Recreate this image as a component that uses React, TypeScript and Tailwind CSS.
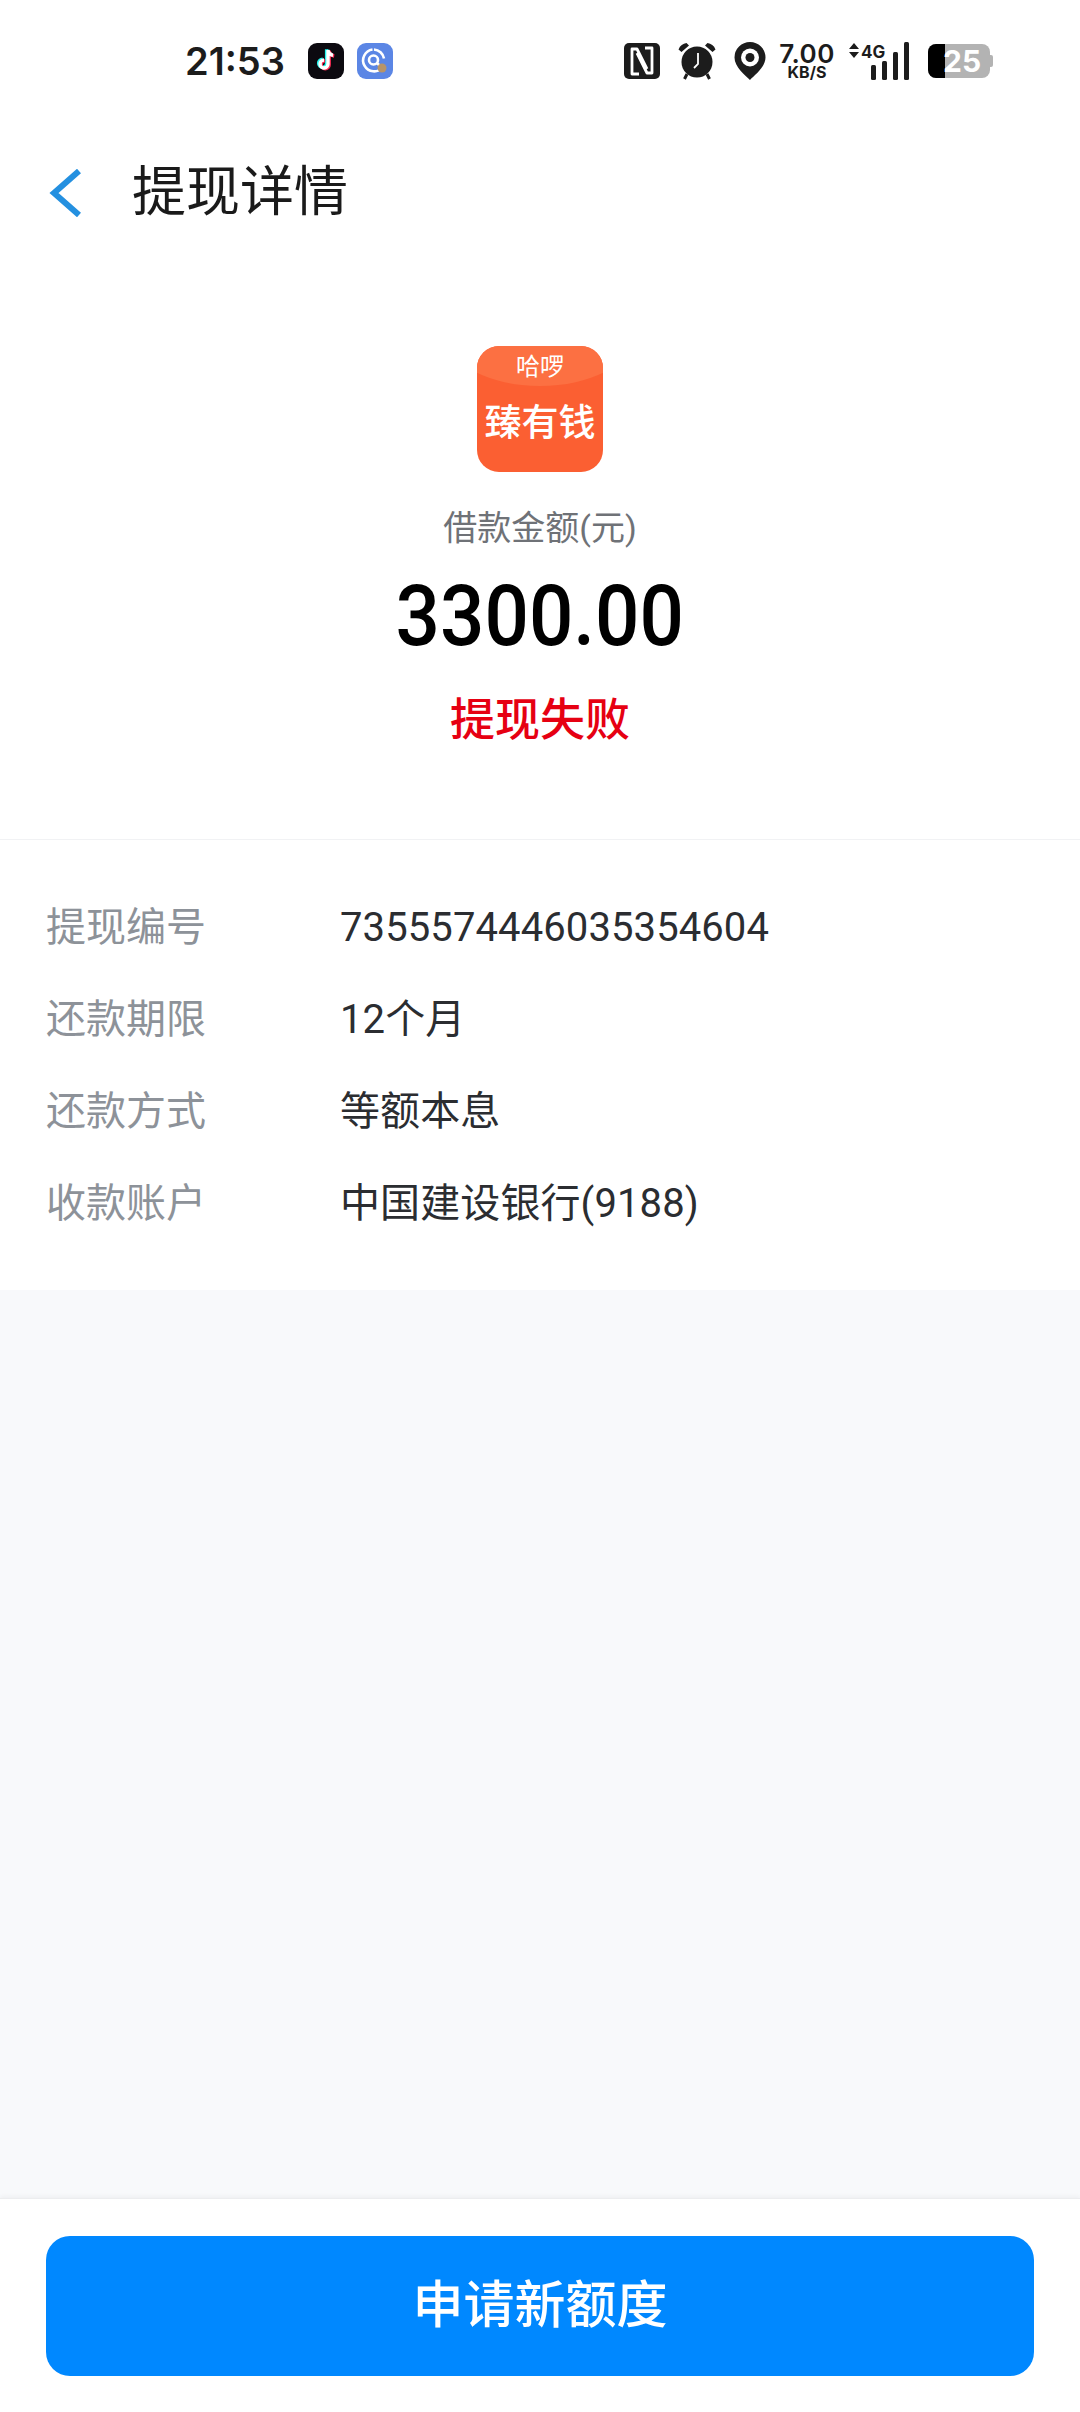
const details = [
  { label: "提现编号", value: "7355574446035354604" },
  { label: "还款期限", value: "12个月" },
  { label: "还款方式", value: "等额本息" },
  { label: "收款账户", value: "中国建设银行(9188)" },
]

function TikTokIcon() {
  const note = "M20 7v14a4 4 0 1 1-4-4M20 7c.4 3 2.200 4.800 5 5.200"
  return (
    <div className="w-9 h-9 rounded-[9px] bg-[#0c0a10] flex items-center justify-center">
      <svg width="36" height="36" viewBox="0 0 36 36" fill="none" strokeWidth="3.4">
        <path d={note} stroke="#25f4ee" transform="translate(-1.4 -0.8)" />
        <path d={note} stroke="#fe2c55" transform="translate(1.2 0.8)" />
        <path d={note} stroke="#ffffff" />
      </svg>
    </div>
  )
}

function BrowserIcon() {
  return (
    <div className="w-9 h-9 rounded-[9px] bg-[#5b86e5]">
      <svg width="36" height="36" viewBox="0 0 36 36" fill="none">
        <path d="M15.500 6.500a11 11 0 1 0 10 18" stroke="#fff" strokeWidth="2.600" />
        <path d="M17 6.500a11 11 0 0 1 10 9" stroke="#fff" strokeWidth="2.600" />
        <circle cx="16.500" cy="17" r="4.500" stroke="#fff" strokeWidth="2.600" />
        <path d="M20 20l3 3" stroke="#fff" strokeWidth="2.500" />
        <circle cx="25" cy="25" r="4.500" fill="#b89467" />
      </svg>
    </div>
  )
}

function NfcIcon() {
  return (
    <svg width="36" height="36" viewBox="0 0 36 36">
      <rect width="36" height="36" rx="5" fill="#1c1c1c" />
      <path d="M15 31h-7V6h5l10 20" fill="none" stroke="#fff" strokeWidth="2.800" strokeLinejoin="round" />
      <path d="M21 5h7v25h-5L13 10" fill="none" stroke="#fff" strokeWidth="2.800" strokeLinejoin="round" />
    </svg>
  )
}

function AlarmIcon() {
  return (
    <svg width="38" height="38" viewBox="0 0 38 38">
      <path d="M0.500 7.500C2 3.500 5 1.500 8.500 1l2.500 2.500-7.500 6.500zM37.500 7.500C36 3.500 33 1.500 29.500 1l-2.500 2.500 7.500 6.500z" fill="#1c1c1c" />
      <path d="M9 32l-2.500 5M29 32l2.500 5" stroke="#1c1c1c" strokeWidth="3" />
      <circle cx="19" cy="20" r="15.500" fill="#1c1c1c" />
      <path d="M20 11v11l-4 4" stroke="#fff" strokeWidth="1.800" fill="none" />
    </svg>
  )
}

function PinIcon() {
  return (
    <svg width="32" height="38" viewBox="0 0 32 38">
      <path d="M16 0a15.500 15.500 0 0 1 15.500 15.500C31.500 25 21 33 16 38 11 33 .5 25 .5 15.500A15.500 15.500 0 0 1 16 0z" fill="#1c1c1c" />
      <circle cx="16" cy="15.500" r="9" fill="#fff" />
      <circle cx="16" cy="15.500" r="4.500" fill="#1c1c1c" />
    </svg>
  )
}

function SignalIcon() {
  return (
    <svg width="62" height="38" viewBox="0 0 62 38">
      <path d="M1 7l5-6 5 6zM1 10l5 6 5-6z" fill="#1c1c1c" />
      <rect x="23" y="23" width="5" height="15" rx="1.500" fill="#1c1c1c" />
      <rect x="34" y="19" width="5" height="19" rx="1.500" fill="#1c1c1c" />
      <rect x="45" y="10" width="5" height="28" rx="1.500" fill="#1c1c1c" />
      <rect x="56" y="0" width="5" height="38" rx="1.500" fill="#1c1c1c" />
    </svg>
  )
}

function StatusBar() {
  return (
    <div className="h-[123px] flex items-start pt-[43px] pl-[185px] pr-[87px] justify-between">
      <div className="flex items-center gap-[23px] h-9">
        <span className="text-[38px] font-semibold text-[#1c1c1c] font-['Inter']">21:53</span>
        <div className="flex gap-[13px]">
          <TikTokIcon />
          <BrowserIcon />
        </div>
      </div>
      <div className="flex items-center h-9 gap-[18px]">
        <NfcIcon />
        <AlarmIcon />
        <PinIcon />
        <div className="flex flex-col items-center font-['Inter'] font-semibold text-[#1c1c1c] ml-[-6px] w-[58px]">
          <span className="text-[26px] leading-[22px] tracking-[0.5px]">7.00</span>
          <span className="text-[16px] leading-[15px] font-bold">KB/S</span>
        </div>
        <div className="relative w-[62px] h-[38px] ml-[-6px]">
          <SignalIcon />
          <span className="absolute left-[13px] top-[-1px] text-[17px] font-bold font-['Inter'] text-[#1c1c1c] leading-[22px]">4G</span>
        </div>
        <div className="relative flex items-center">
          <div className="relative w-[62px] h-[34px] rounded-[8px] bg-[#b3b3b3] overflow-hidden">
            <div className="w-[17px] h-full bg-black" />
            <span className="absolute left-[15px] top-0 text-[30px] leading-[34px] font-bold font-['Inter'] text-white">25</span>
          </div>
          <div className="w-[3px] h-[12px] rounded-r-[2px] bg-[#b3b3b3]" />
        </div>
      </div>
    </div>
  )
}

export default function App() {
  return (
    <div className="w-[1080px] h-[2412px] flex flex-col bg-[#f8f9fb] font-['Roboto','Noto_Sans_CJK_SC',sans-serif] overflow-hidden">
      <div className="bg-white">
        <StatusBar />
        <div className="h-[134px] flex items-center pl-[49px] pt-[5px]">
          <svg width="32" height="48" viewBox="0 0 32 48" fill="none">
            <path d="M30 2L5 24l25 22" stroke="#2490e0" strokeWidth="6" />
          </svg>
          <span className="ml-[51px] text-[54px] text-[#1a1a1a] leading-none">提现详情</span>
        </div>
        <div className="flex flex-col items-center pt-[89px] h-[583px] border-b border-[#f1f2f4]">
          <div className="relative w-[126px] h-[126px] rounded-[22px] bg-[#fb5f32] overflow-hidden flex flex-col items-center">
            <div className="absolute left-[-30px] right-[-30px] top-[-60px] h-[100px] rounded-b-[50%] bg-[#fc7042]" />
            <span className="relative mt-[6px] text-[24px] leading-[30px] text-white">哈啰</span>
            <span className="relative mt-[20px] text-[37px] leading-[44px] font-medium text-white whitespace-nowrap">臻有钱</span>
          </div>
          <span className="mt-[34px] text-[34px] leading-[44px] text-[#6f7277]">借款金额(元)</span>
          <span className="mt-[16px] text-[85px] leading-[100px] font-medium text-black scale-x-[0.92]">3300.00</span>
          <span className="mt-[25px] text-[45px] leading-[60px] font-medium text-[#e60012]">提现失败</span>
        </div>
        <div className="h-[450px] pt-[42px] px-[46px] flex flex-col">
          {details.map((item) => (
            <div key={item.label} className="h-[92px] flex items-center text-[40px]">
              <span className="w-[294px] text-[#8d9299]">{item.label}</span>
              <span className="text-[#2b2d31] tracking-[0.1px]">{item.value}</span>
            </div>
          ))}
        </div>
      </div>
      <div className="flex-1" />
      <div className="h-[214px] bg-white border-t border-[#ecedef] shadow-[0_-2px_4px_rgba(0,0,0,0.04)] px-[46px] pt-[37px]">
        <div className="h-[140px] rounded-[24px] bg-[#0088ff] flex items-center justify-center text-[51px] font-medium text-white">
          申请新额度
        </div>
      </div>
    </div>
  )
}
